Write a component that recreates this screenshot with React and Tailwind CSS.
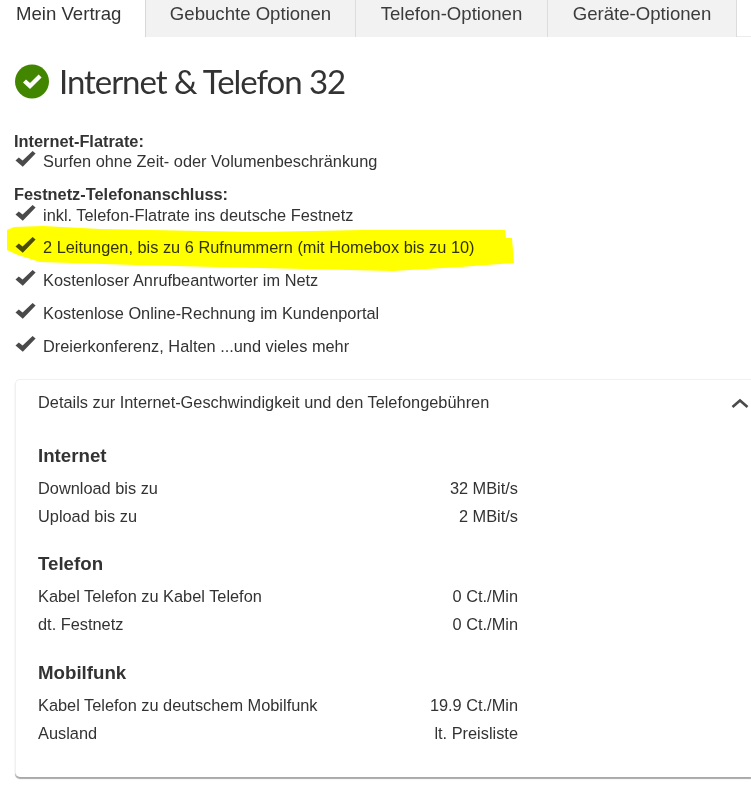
const tabs = [
  { label: 'Mein Vertrag', w: 'w-[146px]', active: true },
  { label: 'Gebuchte Optionen', w: 'w-[210px]' },
  { label: 'Telefon-Optionen', w: 'w-[192px]' },
  { label: 'Geräte-Optionen', w: 'w-[189px]' },
];

const features = [
  { text: 'Kostenloser Anrufbeantworter im Netz' },
  { text: 'Kostenlose Online-Rechnung im Kundenportal' },
  { text: 'Dreierkonferenz, Halten ...und vieles mehr' },
];

const sections = [
  {
    title: 'Internet',
    gap: 'mt-[19px]',
    rows: [
      ['Download bis zu', '32 MBit/s'],
      ['Upload bis zu', '2 MBit/s'],
    ],
  },
  {
    title: 'Telefon',
    gap: 'mt-[26px]',
    rows: [
      ['Kabel Telefon zu Kabel Telefon', '0 Ct./Min'],
      ['dt. Festnetz', '0 Ct./Min'],
    ],
  },
  {
    title: 'Mobilfunk',
    gap: 'mt-[27px]',
    rows: [
      ['Kabel Telefon zu deutschem Mobilfunk', '19.9 Ct./Min'],
      ['Ausland', 'lt. Preisliste'],
    ],
  },
];

const Check = () => (
  <svg className="w-[21px] h-[18px] flex-shrink-0 -translate-y-[2px]" viewBox="0 0 21 18">
    <path d="M0.5 10.5 L3.8 7.4 L7.6 10.4 L17.6 1 L20.6 3.4 L7.8 16.8 Z" fill="#4a4a4a" />
  </svg>
);

const FeatureRow = ({ text, className = '' }) => (
  <div className={`flex items-center gap-[7px] pl-[15px] h-[20px] ${className}`}>
    <Check />
    <span>{text}</span>
  </div>
);

export default function App() {
  return (
    <div className="relative w-[751px] h-[803px] overflow-hidden bg-white text-[#333] font-['Liberation_Sans',Arial,sans-serif] text-[16.35px]">
      {/* Tabs */}
      <div className="flex h-[37px] border-b border-[#ececec]">
        {tabs.map((t) => (
          <div
            key={t.label}
            className={`${t.w} flex-shrink-0 flex items-start pt-[4px] text-[18.6px] leading-[20px] ${
              t.active
                ? 'bg-white pl-[16px] h-[37px] border-r border-[#d8d8d8]'
                : 'bg-[#f2f2f2] justify-center h-[37px] border-r border-[#dcdcdc] text-[#3c3c3c]'
            }`}
          >
            {t.label}
          </div>
        ))}
      </div>

      {/* Heading */}
      <div className="flex items-center gap-[10px] pl-[15px] mt-[22px] h-[44px]">
        <svg className="w-[34px] h-[35px]" viewBox="0 0 34 35">
          <circle cx="17" cy="17.5" r="17" fill="#428600" />
          <path d="M8 18.5 L11 15.4 L15 19 L23.6 10.6 L26.6 13.6 L15 25 Z" fill="#fff" />
        </svg>
        <h1 className="font-['Lato',sans-serif] text-[33px] leading-[44px] text-[#333] font-normal tracking-[-1.05px]">
          Internet &amp; Telefon 32
        </h1>
      </div>

      {/* Feature list */}
      <div className="mt-[28px] relative">
        <div className="pl-[14px] font-bold leading-[20px] h-[20px]">Internet-Flatrate:</div>
        <FeatureRow text="Surfen ohne Zeit- oder Volumenbeschränkung" />
        <div className="pl-[14px] font-bold leading-[20px] h-[20px] mt-[13px]">Festnetz-Telefonanschluss:</div>
        <FeatureRow text="inkl. Telefon-Flatrate ins deutsche Festnetz" className="mt-[1px]" />
        <FeatureRow text="2 Leitungen, bis zu 6 Rufnummern (mit Homebox bis zu 10)" className="mt-[12px] relative" />
        {features.map((f) => (
          <FeatureRow key={f.text} text={f.text} className="mt-[13px]" />
        ))}
      </div>

      {/* Marker highlight */}
      <svg className="absolute left-0 top-[225px] w-[520px] h-[50px] pointer-events-none mix-blend-multiply" viewBox="0 0 520 50">
        <path
          d="M7 5 L14 2 L43 1 L100 4 L260 7 L360 5 L505 5 L506 13 L512 13 L514 38 L460 42 L393 46 L260 43 L135 40 L40 37 L18 30 L7 25 Z"
          fill="#ffff00"
        />
      </svg>

      {/* Details card */}
      <div className="ml-[15px] mt-[23px] h-[398px] rounded-l-[5px] bg-white border-l border-t border-[#f0f0f0] shadow-[0_2px_1px_#a8a8a8] pl-[22px]">
        <div className="flex items-center justify-between h-[45px]">
          <span>Details zur Internet-Geschwindigkeit und den Telefongebühren</span>
          <svg className="w-[18px] h-[11px] mr-[2px] mt-[2px]" viewBox="0 0 18 11">
            <path d="M1.5 9 L9 2.5 L16.5 9" fill="none" stroke="#4a4a4a" strokeWidth="2.6" />
          </svg>
        </div>
        {sections.map((s) => (
          <div key={s.title} className={s.gap}>
            <h2 className="text-[18.7px] font-bold leading-[24px] h-[24px] text-[#333]">{s.title}</h2>
            <div className="mt-[10px] w-[480px]">
              {s.rows.map(([k, v], j) => (
                <div key={k} className={`flex justify-between leading-[20px] h-[20px] ${j > 0 ? 'mt-[8px]' : ''}`}>
                  <span>{k}</span>
                  <span>{v}</span>
                </div>
              ))}
            </div>
          </div>
        ))}
      </div>
    </div>
  );
}
